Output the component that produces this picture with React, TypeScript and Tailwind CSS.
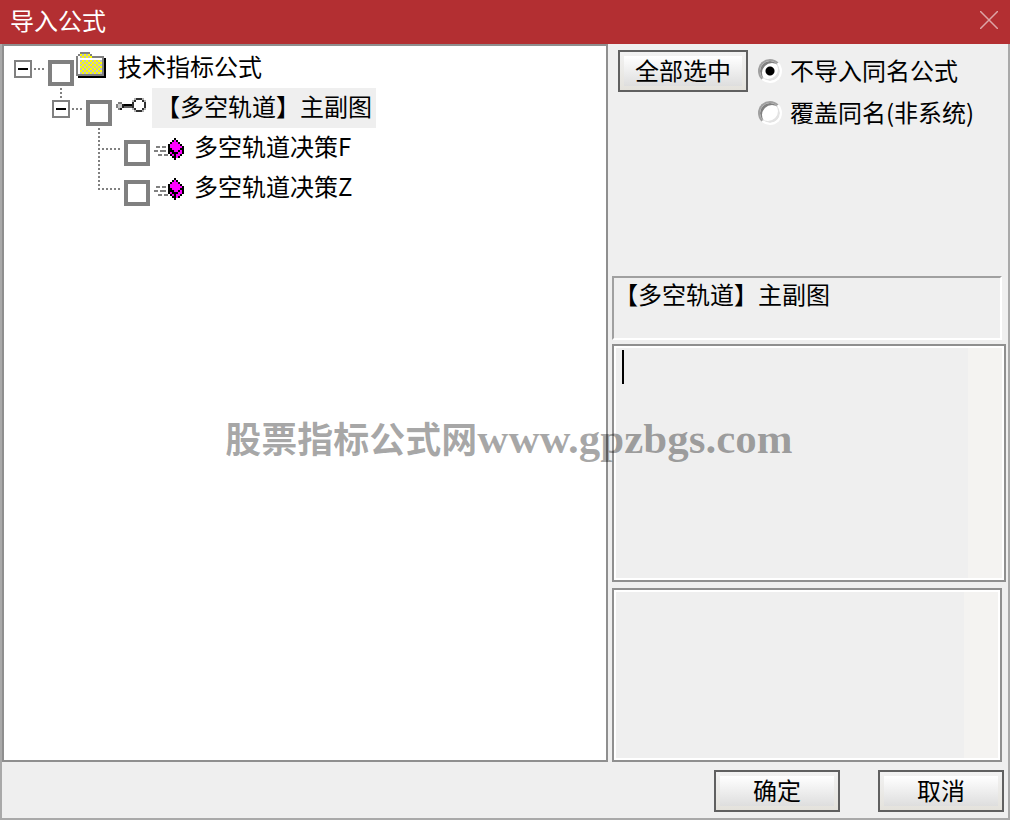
import React from 'react';

type IconKind = 'folder' | 'key' | 'gem';

interface TreeItem {
  id: string;
  label: string;
  level: number;
  icon: IconKind;
  expandable: boolean;
  last?: boolean;
  selected?: boolean;
}

const items: TreeItem[] = [
  { id: 'root', label: '技术指标公式', level: 0, icon: 'folder', expandable: true },
  { id: 'group', label: '【多空轨道】主副图', level: 1, icon: 'key', expandable: true, selected: true },
  { id: 'f', label: '多空轨道决策F', level: 2, icon: 'gem', expandable: false },
  { id: 'z', label: '多空轨道决策Z', level: 2, icon: 'gem', expandable: false, last: true },
];

const indents = ['pl-[6px]', 'pl-[44px]', 'pl-[82px]'];

const FolderIcon: React.FC = () => (
  <svg className="w-10 h-10 shrink-0" viewBox="0 0 20 20" shapeRendering="crispEdges">
    <defs>
      <pattern id="dither" width="2" height="2" patternUnits="userSpaceOnUse">
        <rect width="2" height="2" fill="#c0c0c0" />
        <rect width="1" height="1" fill="#ffff00" />
        <rect x="1" y="1" width="1" height="1" fill="#ffff00" />
      </pattern>
    </defs>
    <path d="M2 14h13V5h1v10H2z" fill="#000" />
    <path d="M1 4h1V3h1V2h5v1h1v1h6v10H1z" fill="#808080" />
    <path d="M2 4h1V3h5v1h1v1h5v8H2z" fill="#fff" />
    <path d="M3 3h5v1h1v1H3zM3 6h11v7H3z" fill="url(#dither)" />
  </svg>
);

const KeyIcon: React.FC = () => (
  <svg className="w-10 h-10 shrink-0" viewBox="0 0 20 20" shapeRendering="crispEdges">
    <path d="M3 7h2v1h1v2H5v1H3v-1H2V8h1z" fill="#808080" />
    <path d="M3 8h2v2H3z" fill="#c8c8c8" />
    <path d="M5 8h1v2H5zM4 10h1v1H4z" fill="#202020" />
    <path d="M6 8h5v1H6z" fill="#000" />
    <path d="M6 9h4v1H6z" fill="#606060" />
    <path d="M12 5h3v1h-3zM11 6h1v1h-1zM15 6h1v1h-1zM10 7h1v3h-1zM16 7h1v3h-1zM11 10h1v1h-1zM15 10h1v1h-1zM12 11h3v1h-3z" fill="#303030" />
    <path d="M11 5h1v1h-1zM15 5h1v1h-1zM10 6h1v1h-1zM16 6h1v1h-1zM10 10h1v1h-1zM16 10h1v1h-1zM11 11h1v1h-1zM15 11h1v1h-1z" fill="#b0b0b0" />
  </svg>
);

const GemIcon: React.FC = () => (
  <svg className="w-10 h-10 shrink-0" viewBox="0 0 20 20" shapeRendering="crispEdges">
    <path d="M3 9h2v1H3zM6 9h2v1H6zM2 11h2v1H2zM5 11h3v1H5zM4 13h2v1H4zM7 13h2v1H7z" fill="#808080" />
    <path d="M12 5h1v1h1v1h1v1h1v1h1v4h-1v1h-1v1h-2v1h-1v-1h-1v-1h-1v-1H9V8h1V7h1V6h1z" fill="#000" />
    <path d="M12 6h1v1h1v1h1v1h1v4h-1v1h-1v1h-2v-1h-1v-1h-1V8h1V7h1z" fill="#ff00ff" />
    <path d="M10 10h1v1h1v1h2v-1h1v-1h1v1h-1v1h-1v1h-1v2h-1v-2h-1v-1h-1z" fill="#000" />
  </svg>
);

const icons: Record<IconKind, React.FC> = { folder: FolderIcon, key: KeyIcon, gem: GemIcon };

const Dots: React.FC<{ d: string }> = ({ d }) => (
  <path d={d} fill="none" stroke="#808080" strokeWidth="2" strokeDasharray="2 2" />
);

const TreeRow: React.FC<{ item: TreeItem }> = ({ item }) => {
  const Icon = icons[item.icon];

  return (
    <li className={`flex h-10 ${indents[item.level]}`}>
      {item.expandable ? (
        <button type="button" aria-label="折叠" className="w-[38px] h-10 shrink-0">
          <svg className="w-full h-full" viewBox="0 0 38 40" shapeRendering="crispEdges">
            {item.level > 0 && <Dots d="M13 0v12" />}
            <Dots d="M24 21h10" />
            <rect x="5" y="13" width="16" height="16" fill="#fff" stroke="#808080" strokeWidth="2" />
            <path d="M8 21h10" stroke="#000" strokeWidth="2" />
          </svg>
        </button>
      ) : (
        <svg className="w-[38px] h-10 shrink-0" viewBox="0 0 38 40" shapeRendering="crispEdges">
          <Dots d={item.last ? 'M13 0v22' : 'M13 0v40'} />
          <Dots d="M16 21h18" />
        </svg>
      )}
      <input
        id={`formula-${item.id}`}
        type="checkbox"
        className="appearance-none w-[26px] h-[26px] mt-3 shrink-0 bg-white border-4 border-[#808080] checked:bg-[#808080]"
      />
      <Icon />
      <label htmlFor={`formula-${item.id}`} className={`h-10 px-1 leading-9 whitespace-nowrap ${item.selected ? 'bg-[#efefef]' : ''}`}>
        {item.label}
      </label>
    </li>
  );
};

const PushButton: React.FC<{ className: string; children: React.ReactNode }> = ({ className, children }) => (
  <button type="button" className={`h-[42px] p-1 border-2 border-[#606060] bg-linear-to-b from-[#f2f2f2] to-[#e4e2dc] ${className}`}>
    <span className="flex h-full items-center justify-center bg-linear-to-b from-white to-[#dedede] pb-[2px]">{children}</span>
  </button>
);

const RadioOption: React.FC<{ label: string; checked?: boolean }> = ({ label, checked }) => (
  <label className="flex h-[42px] items-center gap-2 whitespace-nowrap">
    <input
      type="radio"
      name="same-name"
      defaultChecked={checked}
      className="appearance-none w-6 h-6 shrink-0 rounded-full border-2 border-white border-t-[#a0a0a0] border-l-[#a0a0a0] bg-white shadow-[inset_2px_2px_0_#808080,inset_-2px_-2px_0_#e3e3e3] checked:bg-[radial-gradient(circle,#000_4px,#fff_5px)]"
    />
    <span className="pb-[2px]">{label}</span>
  </label>
);

const TextPane: React.FC<{ label: string; caret?: boolean; className: string }> = ({ label, caret, className }) => (
  <div className={`relative flex border-2 border-[#8f8f8f] bg-white p-[2px] ${className}`}>
    {caret && <span className="absolute left-2 top-1 h-[34px] w-[2px] bg-black" />}
    <textarea aria-label={label} readOnly className="min-w-0 flex-1 resize-none bg-[#efefef] px-[6px] outline-none" />
    <div className="w-[34px] bg-[#f4f3f1]" />
  </div>
);

const App: React.FC = () => {
  return (
    <div className="relative flex min-h-screen flex-col bg-[#efefef] text-2xl text-black font-['Noto_Sans_CJK_SC',sans-serif]">
      <header className="flex h-11 items-center justify-between bg-[#b32f32] pb-1 pl-[10px] pr-3 text-white">
        <h1>导入公式</h1>
        <button type="button" aria-label="关闭">
          <svg className="w-[18px] h-[18px]" viewBox="0 0 18 18" fill="none" stroke="#dda5a6" strokeWidth="1.5">
            <path d="M0 0l18 18M18 0L0 18" />
          </svg>
        </button>
      </header>

      <div className="flex flex-1 flex-col border-x-2 border-b-2 border-[#a9a9a9]">
        <main className="flex flex-1">
          <ul className="min-w-0 flex-1 border-2 border-[#8f8f8f] bg-white pt-[2px]">
            {items.map((item) => (
              <TreeRow key={item.id} item={item} />
            ))}
          </ul>

          <section className="flex w-[400px] shrink-0 flex-col pl-1">
            <div className="flex h-[232px] items-start gap-[10px] pl-[6px] pt-[6px]">
              <PushButton className="w-[130px]">全部选中</PushButton>
              <div>
                <RadioOption label="不导入同名公式" checked />
                <RadioOption label="覆盖同名(非系统)" />
              </div>
            </div>
            <div className="mr-[6px] h-16 border-2 border-white border-t-[#a0a0a0] border-l-[#a0a0a0] leading-8">【多空轨道】主副图</div>
            <TextPane label="公式说明" caret className="mt-1 mr-[2px] flex-[230]" />
            <TextPane label="导入结果" className="mt-[6px] mr-[6px] flex-[166]" />
          </section>
        </main>

        <footer className="flex h-14 items-start justify-end gap-[38px] pt-2 pr-1">
          <PushButton className="w-[126px]">确定</PushButton>
          <PushButton className="w-[126px]">取消</PushButton>
        </footer>
      </div>

      <div className="pointer-events-none absolute inset-x-0 top-[410px] flex items-baseline justify-center pl-2 whitespace-nowrap font-bold text-black/35">
        <span className="text-4xl">股票指标公式网</span>
        <span className="font-['Liberation_Serif',serif] text-[43px]">www.gpzbgs.com</span>
      </div>
    </div>
  );
};

export default App;
